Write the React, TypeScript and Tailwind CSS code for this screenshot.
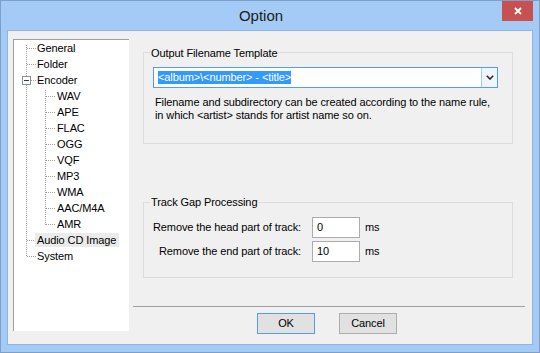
import React from "react";

const treeItems: { label: string; level: number; selected?: boolean }[] = [
  { label: "General", level: 0 },
  { label: "Folder", level: 0 },
  { label: "Encoder", level: 0 },
  { label: "WAV", level: 1 },
  { label: "APE", level: 1 },
  { label: "FLAC", level: 1 },
  { label: "OGG", level: 1 },
  { label: "VQF", level: 1 },
  { label: "MP3", level: 1 },
  { label: "WMA", level: 1 },
  { label: "AAC/M4A", level: 1 },
  { label: "AMR", level: 1 },
  { label: "Audio CD Image", level: 0, selected: true },
  { label: "System", level: 0 },
];

function TreeLines() {
  const dot = { stroke: "#a0a0a0", strokeWidth: 1, strokeDasharray: "1 1", shapeRendering: "crispEdges" as const };
  const subRows = [3, 4, 5, 6, 7, 8, 9, 10, 11];
  return (
    <svg className="absolute left-0 top-0 pointer-events-none" width="115" height="291">
      <line x1="12.5" y1="5" x2="12.5" y2="36" {...dot} />
      <line x1="12.5" y1="45" x2="12.5" y2="217" {...dot} />
      {[0, 1, 12, 13].map((r) => (
        <line key={r} x1="13" y1={8 + 16 * r + 0.5} x2="22" y2={8 + 16 * r + 0.5} {...dot} />
      ))}
      <line x1="17" y1="40.5" x2="22" y2="40.5" {...dot} />
      <line x1="31.5" y1="50" x2="31.5" y2="185" {...dot} />
      {subRows.map((r) => (
        <line key={r} x1="32" y1={8 + 16 * r + 0.5} x2="42" y2={8 + 16 * r + 0.5} {...dot} />
      ))}
      <rect x="8.5" y="36.5" width="8" height="8" fill="white" stroke="#919191" shapeRendering="crispEdges" />
      <line x1="10" y1="40.5" x2="15" y2="40.5" stroke="#1f3c6e" strokeWidth="1" shapeRendering="crispEdges" />
    </svg>
  );
}

export default function App() {
  return (
    <div className="w-[540px] h-[353px] bg-[#a3cbf5] border border-[#7e9fc8] flex flex-col font-['Liberation_Sans',Arial,sans-serif] text-[11px] text-black overflow-hidden">
      <div className="relative h-[29px] shrink-0 flex justify-center pr-[18px]">
        <span className="text-[15px] leading-[29px] text-[#1c1c1c]">Option</span>
        <div className="absolute top-0 right-[6px] w-[31px] h-[20px] bg-[#c75050] flex items-center justify-center">
          <svg width="8" height="8" viewBox="0 0 8 8">
            <path d="M1 1 L7 7 M7 1 L1 7" stroke="white" strokeWidth="1.8" />
          </svg>
        </div>
      </div>

      <div className="relative mx-[6px] mb-[7px] flex-1 border border-[#8fb4e3] bg-[#f0f0f0] flex tracking-[-0.1px]">
        {/* tree */}
        <div className="relative ml-[5px] mt-[8px] w-[116px] h-[292px] bg-white border-l border-t border-[#a0a0a0] shrink-0">
          <TreeLines />
          <div className="relative flex flex-col">
            {treeItems.map((it) => (
              <div
                key={it.label}
                className={`h-[16px] flex items-start ${it.level === 0 ? "pl-[21px]" : "pl-[41px]"}`}
              >
                <span
                  className={`mt-[1px] h-[14px] leading-[14px] pl-[2px] pr-[3px] whitespace-nowrap ${
                    it.selected ? "bg-[#ebebeb]" : ""
                  }`}
                >
                  {it.label}
                </span>
              </div>
            ))}
          </div>
        </div>

        {/* right column */}
        <div className="relative flex-1 flex flex-col">
          {/* group 1 */}
          <div className="relative mt-[21px] ml-[14px] mr-[19px] h-[92px] border border-[#dcdcdc] pt-[14px] pl-[9px]">
            <span className="absolute left-[6px] top-[-6px] px-[1px] leading-[13px] bg-[#f0f0f0]">
              Output Filename Template
            </span>
            <div className="w-[345px] h-[21px] border border-[#569de5] bg-white flex items-center">
              <div className="flex-1 pl-[4px] flex items-center">
                <span className="h-[13px] leading-[13px] bg-[#3399ff] text-white whitespace-nowrap">
                  {"<album>\\<number> - <title>"}
                </span>
              </div>
              <div className="w-[16px] h-full border-l border-[#a9cdf1] bg-[#eef5fc] flex items-center justify-center">
                <svg width="8" height="5" viewBox="0 0 8 5">
                  <path d="M0.8 0.8 L4 4 L7.2 0.8" fill="none" stroke="#2b2b2b" strokeWidth="1.6" />
                </svg>
              </div>
            </div>
            <div className="mt-[8px] ml-[2px] leading-[13px]">
              <div>Filename and subdirectory can be created according to the name rule,</div>
              <div>{"in which <artist> stands for artist name so on."}</div>
            </div>
          </div>

          {/* group 2 */}
          <div className="relative mt-[58px] ml-[14px] mr-[19px] h-[76px] border border-[#dcdcdc] pt-[14px] flex flex-col gap-[3px]">
            <span className="absolute left-[6px] top-[-7px] px-[1px] leading-[13px] bg-[#f0f0f0]">
              Track Gap Processing
            </span>
            <div className="h-[21px] flex items-center">
              <span className="w-[157px] text-right whitespace-nowrap">Remove the head part of track:</span>
              <div className="ml-[11px] w-[48px] h-[21px] border border-[#acacac] bg-white pl-[4px] flex items-center">0</div>
              <span className="ml-[5px]">ms</span>
            </div>
            <div className="h-[21px] flex items-center">
              <span className="w-[157px] text-right whitespace-nowrap">Remove the end part of track:</span>
              <div className="ml-[11px] w-[48px] h-[21px] border border-[#acacac] bg-white pl-[4px] flex items-center">10</div>
              <span className="ml-[5px]">ms</span>
            </div>
          </div>

          {/* separator */}
          <div className="mt-[28px] ml-[4px] mr-[7px] h-px bg-[#a0a0a0]" />

          {/* buttons */}
          <div className="mt-[6px] ml-[128px] flex gap-[24px]">
            <div className="w-[58px] h-[21px] border border-[#569de5] bg-[#e1e1e1] flex items-center justify-center">OK</div>
            <div className="w-[58px] h-[21px] border border-[#adadad] bg-[#e1e1e1] flex items-center justify-center">Cancel</div>
          </div>
        </div>
      </div>
    </div>
  );
}
